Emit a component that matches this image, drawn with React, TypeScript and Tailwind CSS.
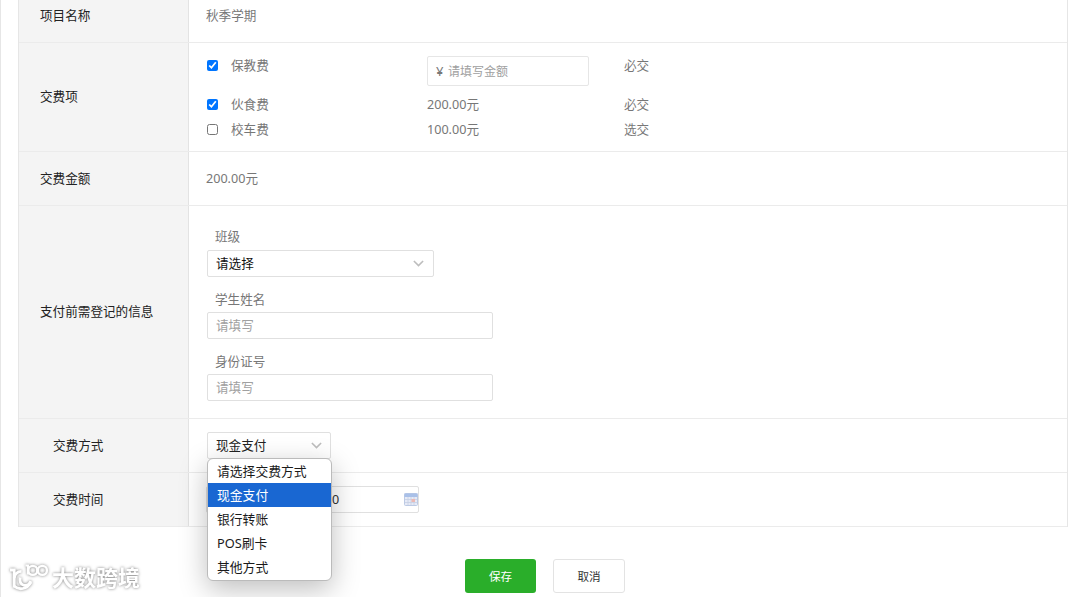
import React, { useState } from 'react'

interface RowProps {
  label: string
  height: string
  indent?: boolean
  children: React.ReactNode
}

const fees = [
  { id: 'care', name: '保教费', amount: null, rule: '必交', checked: true, height: 'h-[39px]' },
  { id: 'meal', name: '伙食费', amount: '200.00元', rule: '必交', checked: true, height: 'h-[25px]' },
  { id: 'bus', name: '校车费', amount: '100.00元', rule: '选交', checked: false, height: 'h-[26px]' },
]

const methods = ['请选择交费方式', '现金支付', '银行转账', 'POS刷卡', '其他方式']

const Row: React.FC<RowProps> = ({ label, height, indent, children }) => (
  <div className={`flex border-b border-[#ebebeb] ${height}`}>
    <div
      className={`flex w-[170px] shrink-0 items-center border-r border-[#e3e3e3] bg-[#f4f4f4] text-[#222] ${
        indent ? 'pl-[34px]' : 'pl-[21px]'
      }`}
    >
      {label}
    </div>
    <div className="min-w-0 flex-1 pl-[17px]">{children}</div>
  </div>
)

const Chevron = () => (
  <svg width="11" height="7" viewBox="0 0 11 7" fill="none" stroke="#bdbdbd" strokeWidth="1.6">
    <path d="M0.9 1 L5.5 5.6 L10.1 1" />
  </svg>
)

const CalendarIcon = () => (
  <svg width="14" height="13" viewBox="0 0 14 13">
    <rect x="0.5" y="0.5" width="13" height="12" rx="1" fill="#e6eaf6" stroke="#bccae4" />
    <rect x="0.5" y="0.5" width="13" height="3.5" fill="#a9c0e8" />
    <path d="M1 6.5H13M1 9.5H13M4 4V12M7 4V12M10 4V12" stroke="#c5cfe4" strokeWidth="0.8" />
    <rect x="7.5" y="6" width="3.5" height="3" fill="#ecb9b4" />
  </svg>
)

const Watermark = () => (
  <div className="absolute top-[561px] left-[7px] flex h-[32px] items-center drop-shadow-[0_0_1.5px_rgba(0,0,0,0.5)]">
    <svg width="41" height="30" viewBox="0 0 41 30" fill="none" stroke="#fff" strokeWidth="2.8">
      <path d="M2 8H6.2V25.5" />
      <path d="M6.2 16C7 11.5 9 9.3 13.5 9.3" />
      <path d="M12.2 15.5C11.5 19 12.5 22 15.5 23.2C18.5 24.2 21.3 22.5 22.8 19.2" />
      <path d="M6.2 24C11 28.5 19 27.5 23 20" />
      <path d="M17.5 3.5H20V12.5" strokeWidth="2.2" />
      <circle cx="24.8" cy="8.4" r="4.5" strokeWidth="2.4" />
      <circle cx="34.4" cy="8.4" r="4.5" strokeWidth="2.4" />
    </svg>
    <span className="ml-[3px] text-[22px] leading-[32px] font-bold text-white">大数跨境</span>
  </div>
)

export default function App() {
  const [method, setMethod] = useState(1)

  return (
    <div className="relative h-[597px] w-[1080px] overflow-hidden border-l border-[#e6e6e6] bg-white font-['Noto_Sans','Noto_Sans_CJK_SC',sans-serif] text-[12.6px] leading-[18px] text-[#777]">
      <div className="ml-[17px] w-[1050px] border-x border-[#e6e6e6]">
        <Row label="项目名称" height="h-[43px] [&>div]:pb-[10px]">
          <div className="pt-[7px]">秋季学期</div>
        </Row>

        <Row label="交费项" height="h-[109px]">
          <div className="pt-[13px]">
            {fees.map((fee) => (
              <div key={fee.id} className={`flex items-start ${fee.height}`}>
                <input type="checkbox" defaultChecked={fee.checked} className="mt-[4px] ml-px h-[11px] w-[11px]" />
                <span className="ml-[13px] w-[196px] pt-px">{fee.name}</span>
                <div className="w-[197px]">
                  {fee.amount ? (
                    <span className="block pt-px">{fee.amount}</span>
                  ) : (
                    <div className="flex h-[30px] w-[162px] items-center rounded-[2px] border border-[#e6e6e6] pl-[8px]">
                      <span className="w-[12px] text-[13px]">¥</span>
                      <input
                        placeholder="请填写金额"
                        className="w-[120px] pt-[2px] text-[12px] outline-none placeholder:text-[#a0a0a0]"
                      />
                    </div>
                  )}
                </div>
                <span className="pt-px">{fee.rule}</span>
              </div>
            ))}
          </div>
        </Row>

        <Row label="交费金额" height="h-[54px]">
          <div className="flex h-full items-center">200.00元</div>
        </Row>

        <Row label="支付前需登记的信息" height="h-[213px]">
          <div className="flex flex-col pt-[22px] pl-px">
            <label className="pl-[8px]">班级</label>
            <div className="mt-[4px] flex h-[27px] w-[227px] items-center justify-between rounded-[2px] border border-[#e0e0e0] pr-[9px] pl-[8px] text-[#111]">
              请选择
              <Chevron />
            </div>
            <label className="mt-[14px] pl-[8px]">学生姓名</label>
            <input
              placeholder="请填写"
              className="mt-[3px] h-[27px] w-[286px] rounded-[2px] border border-[#e0e0e0] px-[8px] outline-none placeholder:text-[#a0a0a0]"
            />
            <label className="mt-[14px] pl-[8px]">身份证号</label>
            <input
              placeholder="请填写"
              className="mt-[3px] h-[27px] w-[286px] rounded-[2px] border border-[#e0e0e0] px-[8px] outline-none placeholder:text-[#a0a0a0]"
            />
          </div>
        </Row>

        <Row label="交费方式" height="h-[54px]" indent>
          <div className="relative flex h-full items-center pl-px">
            <div className="flex h-[27px] w-[124px] items-center justify-between rounded-[2px] border border-[#e0e0e0] px-[8px] text-[#222]">
              {methods[method]}
              <Chevron />
            </div>
            <ul className="absolute top-[39px] left-px z-10 h-[123px] w-[125px] overflow-hidden rounded-[6px] border border-[#bbb] bg-white text-[12.8px] text-[#1a1a1a] shadow-[0_8px_28px_rgba(0,0,0,0.26)]">
              {methods.map((item, index) => (
                <li
                  key={item}
                  onClick={() => setMethod(index)}
                  className={`flex h-[24.1px] items-center pl-[9px] ${index === method ? 'bg-[#1967d2] text-white' : ''}`}
                >
                  {item}
                </li>
              ))}
            </ul>
          </div>
        </Row>

        <Row label="交费时间" height="h-[54px]" indent>
          <div className="flex h-full items-center">
            <div className="flex h-[27px] w-[213px] items-center justify-between rounded-[2px] border border-[#e0e0e0] pl-[125px] text-[#333]">
              0
              <CalendarIcon />
            </div>
          </div>
        </Row>
      </div>

      <div className="mt-[32px] ml-[464px] flex gap-[17px] text-[11.6px]">
        <button className="h-[34px] w-[71px] rounded-[3px] bg-[#2aae2a] pt-[2px] text-white">保存</button>
        <button className="h-[34px] w-[72px] rounded-[3px] border border-[#e3e3e3] bg-white pt-[2px] text-[#333]">
          取消
        </button>
      </div>

      <Watermark />
    </div>
  )
}
